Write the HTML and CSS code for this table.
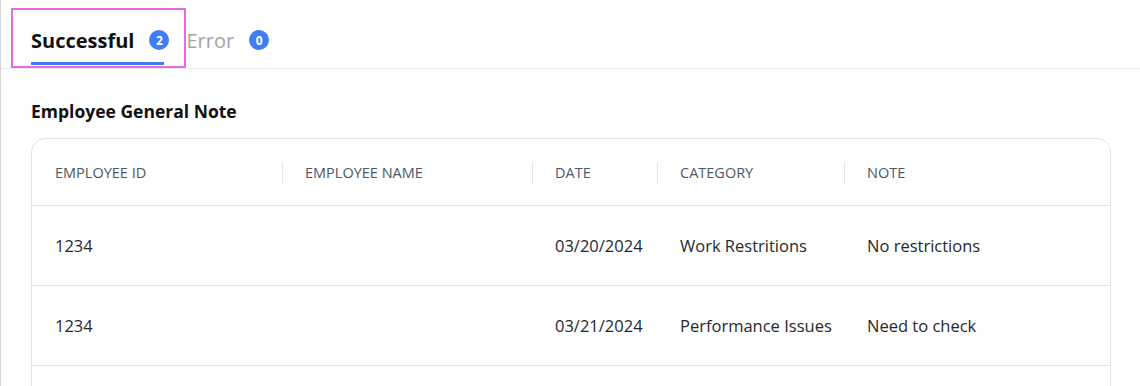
FILE: index.html
```html
<!DOCTYPE html>
<html lang="en">
<head>
    <meta charset="UTF-8">
    <meta name="viewport" content="width=device-width, initial-scale=1.0">
    <title>Import Results</title>
    <link rel="stylesheet" href="styles.css">
</head>
<body>
    <!-- Result tabs -->
    <div class="tabs">
        <button class="tab active">
            <span class="tab-label">Successful</span>
            <span class="badge">2</span>
        </button>
        <button class="tab">
            <span class="tab-label">Error</span>
            <span class="badge">0</span>
        </button>
    </div>

    <!-- Imported records -->
    <div class="section">
        <h3 class="section-title">Employee General Note</h3>
        <div class="table-card">
            <div class="table-row table-head">
                <div class="cell">Employee ID</div>
                <div class="cell">Employee Name</div>
                <div class="cell">Date</div>
                <div class="cell">Category</div>
                <div class="cell">Note</div>
            </div>
            <div class="table-row">
                <div class="cell">1234</div>
                <div class="cell"></div>
                <div class="cell">03/20/2024</div>
                <div class="cell">Work Restritions</div>
                <div class="cell">No restrictions</div>
            </div>
            <div class="table-row">
                <div class="cell">1234</div>
                <div class="cell"></div>
                <div class="cell">03/21/2024</div>
                <div class="cell">Performance Issues</div>
                <div class="cell">Need to check</div>
            </div>
            <div class="table-row">
                <div class="cell"></div>
                <div class="cell"></div>
                <div class="cell"></div>
                <div class="cell"></div>
                <div class="cell"></div>
            </div>
        </div>
    </div>
</body>
</html>
```

FILE: styles.css
```css
html, body {
    margin: 0;
    height: 100%;
}
body {
    font-family: "Open Sans", Arial, sans-serif;
    color: #1f2329;
    background: #fff;
    border-left: 1px solid #d4d4d4;
    overflow: hidden;
}

/* tabs */
.tabs {
    display: flex;
    padding: 8px 0 0 10px;
    border-bottom: 1px solid #e9e9ef;
}
.tab {
    position: relative;
    display: flex;
    align-items: center;
    gap: 15px;
    height: 60px;
    padding: 4px 0 0 0;
    border: none;
    background: none;
    font-family: inherit;
    font-size: 20px;
    color: #a3a3a3;
    cursor: pointer;
}
.tab.active {
    padding: 4px 17px 0 20px;
    color: #111;
    font-weight: 700;
    outline: 2px solid #e46be0;
    outline-offset: -2px;
}
.tab.active::after {
    content: "";
    position: absolute;
    left: 20px;
    right: 22px;
    bottom: 3px;
    height: 3px;
    background: #3f7bf0;
}
.badge {
    display: inline-flex;
    align-items: center;
    justify-content: center;
    width: 20px;
    height: 20px;
    border-radius: 50%;
    background: #3f7cf5;
    color: #fff;
    font-size: 12px;
    font-weight: 700;
}

/* section */
.section {
    padding: 30px 29px 0 30px;
}
.section-title {
    margin: 0 0 15px;
    font-size: 17.5px;
    line-height: 24px;
    font-weight: 700;
    color: #111;
}

/* table */
.table-card {
    border: 1px solid #e2e2e2;
    border-radius: 14px 14px 0 0;
}
.table-row {
    display: grid;
    grid-template-columns: 250px 250px 125px 187px 1fr;
    height: 79px;
    align-items: center;
    border-top: 1px solid #e2e2e2;
    font-size: 16.5px;
    color: #24292f;
}
.table-head {
    height: 66px;
    border-top: none;
    font-size: 14.5px;
    text-transform: uppercase;
    color: #4e5668;
}
.cell {
    position: relative;
    padding-left: 23px;
}
.table-head .cell + .cell::before {
    content: "";
    position: absolute;
    left: 0;
    top: -1px;
    bottom: -1px;
    border-left: 1px solid #e5e5e5;
}
```
